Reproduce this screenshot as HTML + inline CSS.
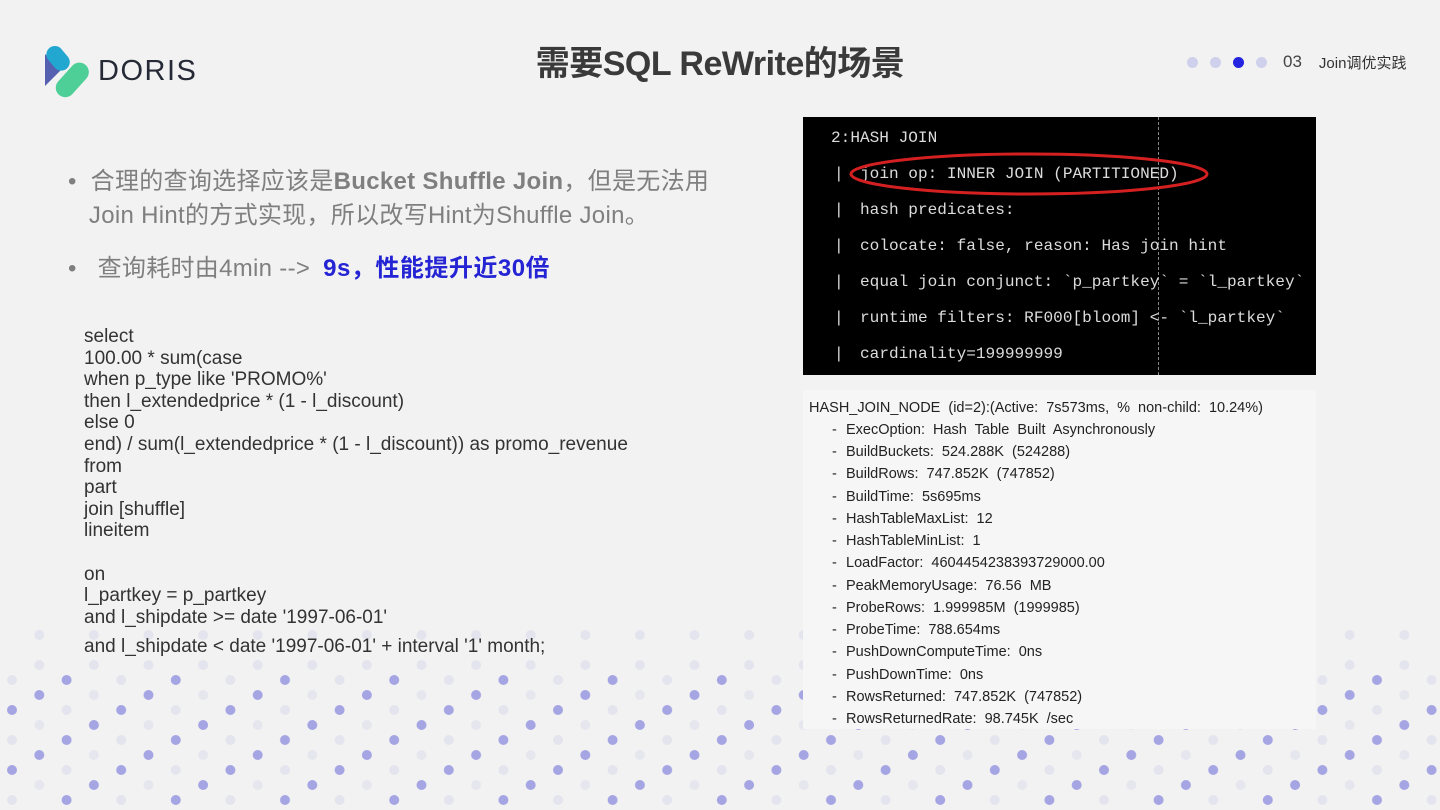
<!DOCTYPE html>
<html><head><meta charset="utf-8"><style>
*{margin:0;padding:0;box-sizing:border-box}
body{width:1440px;height:810px;background:#f2f2f2;position:relative;overflow:hidden;font-family:"Liberation Sans","Noto Sans CJK SC",sans-serif}
.abs{position:absolute}
.title{left:0;width:1440px;top:36px;text-align:center;font-size:34px;font-weight:bold;color:#3a3a3a;letter-spacing:-0.5px}
.nav{top:52px;left:1187px;height:20px;display:flex;align-items:center}
.dot{width:11px;height:11px;border-radius:50%;background:#cfd0ec;margin-right:12px}
.bul{font-size:24px;color:#7f7f7f;line-height:34px;letter-spacing:0.3px}
.code{left:84px;top:326px;font-size:19px;color:#333;line-height:21.6px}
.term{left:803px;top:117px;width:513px;height:258px;background:#000}
.term .l{position:absolute;left:57px;font-family:"Liberation Mono",monospace;font-size:16.1px;color:#dcdcdc;white-space:pre}
.term .p{position:absolute;left:31px;font-family:"Liberation Mono",monospace;font-size:16.1px;color:#dcdcdc}
.panel{left:803px;top:390px;width:513px;height:339px;background:#f6f6f6}
.panel div{position:absolute;left:43px;font-size:14.5px;color:#222;white-space:pre;word-spacing:4px}
.panel div:before{content:"-";position:absolute;left:-14px}
.panel div.h:before{content:none}
</style></head><body>
<svg class="abs" style="left:0;top:0" width="1440" height="810">
<defs>
<pattern id="p" x="12" y="680" width="109.2" height="60" patternUnits="userSpaceOnUse">
<circle cx="0" cy="0" r="5" fill="#e4e4ee"/><circle cx="54.6" cy="0" r="5" fill="#a5a5e4"/>
<circle cx="27.3" cy="15" r="5" fill="#a5a5e4"/><circle cx="81.9" cy="15" r="5" fill="#e6e6ee"/>
<circle cx="0" cy="30" r="5" fill="#a5a5e4"/><circle cx="54.6" cy="30" r="5" fill="#e4e4ee"/>
<circle cx="27.3" cy="45" r="5" fill="#e6e6ee"/><circle cx="81.9" cy="45" r="5" fill="#a5a5e4"/>
<circle cx="109.2" cy="0" r="5" fill="#e4e4ee"/><circle cx="109.2" cy="30" r="5" fill="#a5a5e4"/>
<circle cx="0" cy="60" r="5" fill="#e4e4ee"/><circle cx="54.6" cy="60" r="5" fill="#a5a5e4"/><circle cx="109.2" cy="60" r="5" fill="#e4e4ee"/>
</pattern>
<pattern id="q" x="12" y="620" width="54.6" height="30" patternUnits="userSpaceOnUse">
<circle cx="27.3" cy="15" r="5" fill="#e4e4ee"/>
</pattern>
</defs>
<rect x="0" y="628" width="1440" height="46" fill="url(#q)"/>
<rect x="0" y="674" width="1440" height="136" fill="url(#p)"/>
</svg>
<svg class="abs" style="left:44px;top:44px" width="56" height="56" viewBox="0 0 56 56">
<path d="M1 10 L17 26 L1 42 Z" fill="#5560b0"/>
<rect x="6" y="1" width="17" height="27" rx="8.5" transform="rotate(-40 14 15)" fill="#22a8d0"/>
<rect x="18" y="16" width="19" height="40" rx="9.5" transform="rotate(42 28 37)" fill="#4fcf98"/>
</svg>
<div class="abs" style="left:98px;top:55px;font-size:29px;color:#262a36;letter-spacing:1.5px">DORIS</div>
<div class="abs title">需要SQL ReWrite的场景</div>
<div class="abs nav"><div class="dot"></div><div class="dot"></div><div class="dot" style="background:#2323e0"></div><div class="dot"></div>
<span style="font-size:17px;color:#444;margin-left:4px">03</span><span style="font-size:15px;color:#333;margin-left:17px">Join调优实践</span></div>
<div class="abs bul" style="left:68px;top:165px">•&nbsp;&nbsp;合理的查询选择应该是<b>Bucket Shuffle Join</b>，但是无法用<br>&nbsp;&nbsp;&nbsp;Join Hint的方式实现，所以改写Hint为Shuffle Join。</div>
<div class="abs bul" style="left:68px;top:252px">•&nbsp;&nbsp;&nbsp;查询耗时由4min --&gt; <b style="color:#2424d4;letter-spacing:0.5px;margin-left:6px">9s，性能提升近30倍</b></div>
<div class="abs code">select<br>100.00 * sum(case<br>when p_type like 'PROMO%'<br>then l_extendedprice * (1 - l_discount)<br>else 0<br>end) / sum(l_extendedprice * (1 - l_discount)) as promo_revenue<br>from<br>part<br>join [shuffle]<br>lineitem<br><br>on<br>l_partkey = p_partkey<br>and l_shipdate &gt;= date '1997-06-01'<br><div style="margin-top:8px">and l_shipdate &lt; date '1997-06-01' + interval '1' month;</div></div>
<div class="abs term">
<div style="position:absolute;left:355px;top:0;height:258px;border-left:1px dashed #888"></div>
<div class="l" style="left:28px;top:12px">2:HASH JOIN</div>
<div class="p" style="top:48px">|</div><div class="l" style="top:48px">join op: INNER JOIN (PARTITIONED)</div>
<div class="p" style="top:84px">|</div><div class="l" style="top:84px">hash predicates:</div>
<div class="p" style="top:120px">|</div><div class="l" style="top:120px">colocate: false, reason: Has join hint</div>
<div class="p" style="top:156px">|</div><div class="l" style="top:156px">equal join conjunct: `p_partkey` = `l_partkey`</div>
<div class="p" style="top:192px">|</div><div class="l" style="top:192px">runtime filters: RF000[bloom] &lt;- `l_partkey`</div>
<div class="p" style="top:228px">|</div><div class="l" style="top:228px">cardinality=199999999</div>
<svg style="position:absolute;left:0;top:0" width="513" height="258"><ellipse cx="226" cy="57" rx="178" ry="20" fill="none" stroke="#d42020" stroke-width="3"/></svg>
</div>
<div class="abs panel">
<div class="h" style="left:6px;top:10px">HASH_JOIN_NODE (id=2):(Active: 7s573ms, % non-child: 10.24%)</div>
<div style="top:32px">ExecOption: Hash Table Built Asynchronously</div>
<div style="top:54px">BuildBuckets: 524.288K (524288)</div>
<div style="top:76px">BuildRows: 747.852K (747852)</div>
<div style="top:99px">BuildTime: 5s695ms</div>
<div style="top:121px">HashTableMaxList: 12</div>
<div style="top:143px">HashTableMinList: 1</div>
<div style="top:165px">LoadFactor: 4604454238393729000.00</div>
<div style="top:188px">PeakMemoryUsage: 76.56 MB</div>
<div style="top:210px">ProbeRows: 1.999985M (1999985)</div>
<div style="top:232px">ProbeTime: 788.654ms</div>
<div style="top:254px">PushDownComputeTime: 0ns</div>
<div style="top:277px">PushDownTime: 0ns</div>
<div style="top:299px">RowsReturned: 747.852K (747852)</div>
<div style="top:321px">RowsReturnedRate: 98.745K /sec</div>
</div>
</body></html>
